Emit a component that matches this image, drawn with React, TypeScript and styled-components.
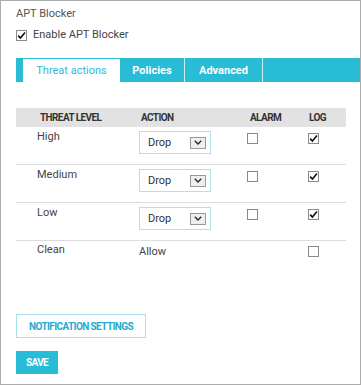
import React from "react";
import styled, { createGlobalStyle } from "styled-components";

const GlobalStyle = createGlobalStyle`
  html, body {
    margin: 0;
    padding: 0;
    background: #fff;
  }
  body {
    font-family: Roboto, "Liberation Sans", Arial, sans-serif;
    color: #444;
  }
`;

const CYAN = "#29bcd7";

const Frame = styled.div`
  width: 361px;
  height: 385px;
  box-sizing: border-box;
  border: 1px solid #acacac;
  padding: 6px 0 0 15px;
  overflow: hidden;
`;

const Title = styled.div`
  font-size: 11px;
  line-height: 14px;
  color: #555;
`;

const CheckRow = styled.label`
  display: flex;
  align-items: center;
  gap: 6px;
  margin-top: 7px;
  font-size: 11px;
  line-height: 14px;
  color: #444;
`;

const Box = styled.span`
  display: inline-flex;
  align-items: center;
  justify-content: center;
  width: 9px;
  height: 9px;
  border: 1px solid #8a8a8a;
  background: #fff;
  flex: none;
`;

const TabBar = styled.div`
  display: flex;
  height: 24px;
  margin-top: 16px;
  background: ${CYAN};
  padding-left: 7px;
`;

const Tab = styled.div<{ $active?: boolean; $w: number; $line?: boolean }>`
  width: ${(p) => p.$w}px;
  display: flex;
  align-items: center;
  justify-content: center;
  font-size: 11px;
  box-sizing: border-box;
  background: ${(p) => (p.$active ? "#fff" : CYAN)};
  color: ${(p) => (p.$active ? "#38b6d6" : "#fff")};
  font-weight: ${(p) => (p.$active ? 400 : 700)};
  border-top: ${(p) => (p.$active ? `1px solid ${CYAN}` : "none")};
  border-right: ${(p) => (p.$line ? "1px solid #c9eef5" : "none")};
`;

const Table = styled.div`
  display: grid;
  grid-template-columns: 123px 108px 61px 38px;
  width: 330px;
  margin-top: 26px;
`;

const Head = styled.div<{ $pad: number }>`
  height: 19px;
  background: #e2e2e2;
  display: flex;
  align-items: center;
  padding-left: ${(p) => p.$pad}px;
  font-size: 10px;
  font-weight: 700;
  letter-spacing: -0.6px;
  color: #333;
  text-transform: uppercase;
`;

const Cell = styled.div<{ $pad?: number; $top?: number; $last?: boolean }>`
  height: ${(p) => (p.$last ? 36 : 38)}px;
  box-sizing: border-box;
  padding-left: ${(p) => p.$pad ?? 0}px;
  padding-top: ${(p) => p.$top ?? 4}px;
  border-bottom: ${(p) => (p.$last ? "none" : "1px solid #dcdcdc")};
  font-size: 11px;
  line-height: 14px;
  color: #444;
`;

const Select = styled.div`
  width: 72px;
  height: 23px;
  box-sizing: border-box;
  border: 1px solid #ace2ee;
  display: flex;
  align-items: center;
  justify-content: space-between;
  padding: 0 4px 0 8px;
  font-size: 11px;
  color: #333;
`;

const DropBtn = styled.span`
  width: 16px;
  height: 12px;
  box-sizing: border-box;
  border: 1px solid #999;
  background: #eee;
  display: inline-flex;
  align-items: center;
  justify-content: center;
`;

const OutlineButton = styled.button`
  display: block;
  margin-top: 37px;
  width: 130px;
  height: 24px;
  border: 1px solid #a9dfec;
  background: #fff;
  color: #27a9cf;
  font-family: Roboto, "Liberation Sans", Arial, sans-serif;
  font-size: 10px;
  font-weight: 700;
  letter-spacing: -0.6px;
  padding: 0;
`;

const SaveButton = styled.button`
  display: block;
  margin-top: 13px;
  width: 42px;
  height: 23px;
  border: none;
  background: ${CYAN};
  color: #fff;
  font-family: Roboto, "Liberation Sans", Arial, sans-serif;
  font-size: 10px;
  font-weight: 700;
  letter-spacing: -0.6px;
  padding: 0;
`;

const Check = () => (
  <svg width="9" height="9" viewBox="0 0 9 9">
    <path d="M1.2 4.6 L3.4 7 L8 1.4" fill="none" stroke="#111" strokeWidth="1.6" />
  </svg>
);

const CheckBox = ({ checked }: { checked?: boolean }) => (
  <Box>{checked && <Check />}</Box>
);

const Chevron = () => (
  <svg width="8" height="5" viewBox="0 0 8 5">
    <path d="M0.8 0.8 L4 4 L7.2 0.8" fill="none" stroke="#222" strokeWidth="1.3" />
  </svg>
);

const rows = [
  { level: "High", alarm: false, log: true },
  { level: "Medium", alarm: false, log: true },
  { level: "Low", alarm: false, log: true },
];

export default function App() {
  return (
    <>
      <GlobalStyle />
      <Frame>
        <Title>APT Blocker</Title>
        <CheckRow>
          <CheckBox checked />
          Enable APT Blocker
        </CheckRow>

        <TabBar>
          <Tab $active $w={97}>Threat actions</Tab>
          <Tab $w={65} $line>Policies</Tab>
          <Tab $w={78} $line>Advanced</Tab>
        </TabBar>

        <Table>
          <Head $pad={24}>Threat Level</Head>
          <Head $pad={2}>Action</Head>
          <Head $pad={3}>Alarm</Head>
          <Head $pad={1}>Log</Head>

          {rows.map((r) => (
            <React.Fragment key={r.level}>
              <Cell $pad={21} $top={3}>{r.level}</Cell>
              <Cell $top={4}>
                <Select>
                  Drop
                  <DropBtn>
                    <Chevron />
                  </DropBtn>
                </Select>
              </Cell>
              <Cell $top={6}>
                <CheckBox checked={r.alarm} />
              </Cell>
              <Cell $top={6}>
                <CheckBox checked={r.log} />
              </Cell>
            </React.Fragment>
          ))}

          <Cell $pad={21} $top={2} $last>Clean</Cell>
          <Cell $top={4} $last>Allow</Cell>
          <Cell $last />
          <Cell $top={5} $last>
            <CheckBox />
          </Cell>
        </Table>

        <OutlineButton>NOTIFICATION SETTINGS</OutlineButton>
        <SaveButton>SAVE</SaveButton>
      </Frame>
    </>
  );
}
